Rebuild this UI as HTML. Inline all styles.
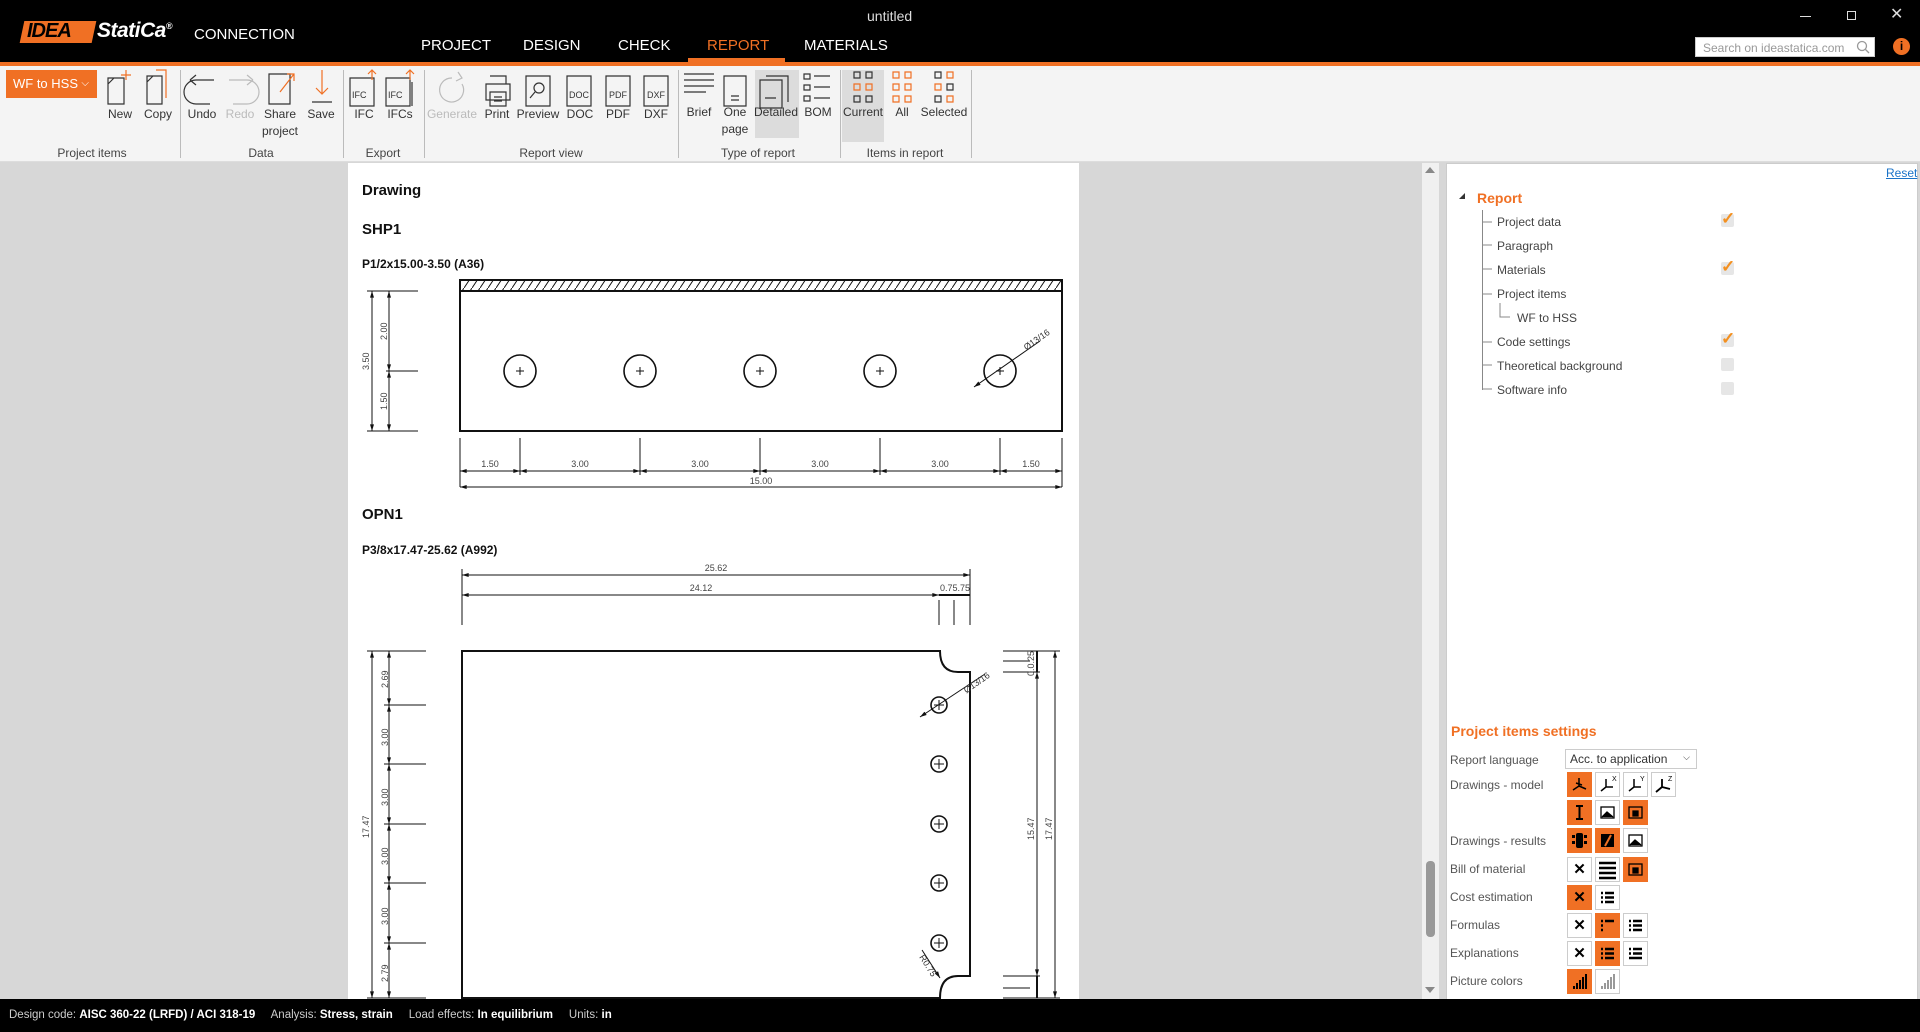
<!DOCTYPE html>
<html><head><meta charset="utf-8">
<style>
*{margin:0;padding:0;box-sizing:border-box}
body{width:1920px;height:1032px;position:relative;overflow:hidden;background:#d7d7d7;font-family:"Liberation Sans",sans-serif;color:#333}
.a{position:absolute}
#title{left:0;top:0;width:1920px;height:62px;background:#000}
#oline{left:0;top:62px;width:1920px;height:4px;background:#f07024}
#ribbon{left:0;top:66px;width:1920px;height:96px;background:#f4f4f4;border-bottom:1px solid #ddd}
.tab{top:37px;font-size:15px;color:#fff}
.lbl{font-size:12px;color:#333;text-align:center;width:70px;line-height:17px}
.glbl{top:146px;font-size:12px;color:#444;text-align:center;width:140px}
.sep{top:70px;width:1px;height:88px;background:#bbb}
#status{left:0;top:999px;width:1920px;height:33px;background:#000;color:#ccc;font-size:11.5px;line-height:33px;padding-left:9px}
#status b{color:#fff;font-weight:bold}
.tr{font-size:12px;color:#444;left:1497px}
.cb{left:1721px;width:13px;height:13px;background:#e6e6e6;border-radius:2px}
.ck{color:#f39020;font-size:17px;line-height:10px;font-weight:bold}
.sl{left:1450px;font-size:12px;color:#555}
.bt{width:25px;height:25px;border:1px solid #ccc;background:#fff}
.bt.o{background:#f07024;border-color:#f07024}
.bt svg{display:block}
</style></head><body>

<div id="title" class="a"></div>
<div class="a" style="left:22px;top:21px;width:72px;height:22px;transform:skewX(-12deg);background:#f07024"></div>
<div class="a" style="left:27px;top:20px;font-size:20px;font-weight:bold;font-style:italic;color:#000;letter-spacing:-1px">IDEA</div>
<div class="a" style="left:97px;top:19px;font-size:21px;font-weight:bold;font-style:italic;color:#fff;letter-spacing:-0.5px">StatiCa<sup style="font-size:9px">®</sup></div>
<div class="a" style="left:194px;top:26px;font-size:15px;color:#fff">CONNECTION</div>
<div class="a" style="left:867px;top:8px;font-size:14px;color:#ddd">untitled</div>
<div class="a tab" style="left:421px">PROJECT</div>
<div class="a tab" style="left:523px">DESIGN</div>
<div class="a tab" style="left:618px">CHECK</div>
<div class="a tab" style="left:707px;color:#f07024">REPORT</div>
<div class="a" style="left:688px;top:58px;width:97px;height:4px;background:#f07024"></div>
<div class="a tab" style="left:804px">MATERIALS</div>
<div class="a" style="left:1800px;top:16px;width:11px;height:1px;background:#ddd"></div>
<div class="a" style="left:1847px;top:11px;width:9px;height:9px;border:1px solid #ddd"></div>
<div class="a" style="left:1890px;top:4px;font-size:16px;color:#ddd">✕</div>
<div class="a" style="left:1695px;top:37px;width:180px;height:20px;background:#fff;border:1px solid #ccc;font-size:12px;color:#999;padding:3px 0 0 7px">Search on ideastatica.com</div>
<svg class="a" style="left:1856px;top:40px" width="14" height="14"><circle cx="6" cy="6" r="4.5" fill="none" stroke="#999" stroke-width="1.3"/><line x1="9.5" y1="9.5" x2="13" y2="13" stroke="#999" stroke-width="1.3"/></svg>
<div class="a" style="left:1893px;top:38px;width:17px;height:17px;border-radius:50%;background:#f07024;color:#000;font-size:12px;text-align:center;line-height:17px;font-weight:bold">i</div>
<div id="oline" class="a"></div>

<div id="ribbon" class="a"></div>
<div class="a" style="left:755px;top:70px;width:44px;height:68px;background:#dcdcdc"></div>
<div class="a" style="left:842px;top:70px;width:42px;height:72px;background:#dcdcdc"></div>
<div class="a" style="left:6px;top:70px;width:91px;height:28px;background:#f07024;color:#fff;font-size:13px;line-height:28px;padding-left:7px">WF to HSS <span style="float:right;margin-right:8px;font-size:10px">⌵</span></div>

<svg class="a" style="left:0;top:66px" width="980" height="60" fill="none" stroke="#333" stroke-width="1.2">
 <path d="M108,12 H124 V38 H108 V18 Z M108,18 L114,12"/><path d="M126,4 V14 M121,9 H131" stroke="#f07024"/>
 <path d="M147,10 H162 V38 H147 V16 Z M147,16 L153,10"/><path d="M156,4 H166 V32" stroke="#f07024"/>
 <path d="M210,38 H196 A12,12 0 0 1 196,14 H214 M190,14 L196,9 M190,14 L196,19" />
 <path d="M233,38 H247 A12,12 0 0 0 247,14 H229 M253,14 L247,9 M253,14 L247,19" stroke="#bbb"/>
 <path d="M269,8 H290 V38 H269 Z"/><path d="M280,26 L294,8 M287,8 H294 V15" stroke="#f07024"/>
 <path d="M312,36 H332"/><path d="M322,4 V28 M316,22 L322,28 L328,22" stroke="#f07024"/>
 <path d="M350,12 H374 V40 H350 V18 Z"/><path d="M372,4 V14 M368,8 L372,4 L376,8" stroke="#f07024"/>
 <path d="M386,12 H410 V40 H386 V18 Z M412,16 V40"/><path d="M410,4 V14 M406,8 L410,4 L414,8" stroke="#f07024"/>
 <path d="M462,18 A12,12 0 1 1 452,12 M458,6 L462,12 L456,15" stroke="#bbb"/>
 <path d="M486,18 H510 V34 H486 Z M490,10 H506 V18 M490,26 H506 V40 H490 Z M494,31 H502 M494,35 H502"/>
 <path d="M526,10 H550 V40 H526 Z"/><circle cx="539" cy="22" r="5"/><path d="M535,26 L530,32"/>
 <path d="M567,10 H591 V40 H567 V16 Z"/>
 <path d="M606,10 H630 V40 H606 V16 Z"/>
 <path d="M644,10 H668 V40 H644 V16 Z"/>
 <path d="M684,8 H714 M684,14 H714 M684,20 H714 M684,26 H706"/>
 <path d="M724,10 H746 V40 H724 Z M731,30 H739 M731,34 H739"/>
 <path d="M766,10 H788 V36 M760,14 H782 V42 H760 Z M765,32 H776"/>
 <path d="M804,8 h6 v5 h-6z M814,10 H830 M804,19 h6 v5 h-6z M814,21 H830 M804,30 h6 v5 h-6z M814,32 H830"/>
 <path d="M854,6 h6 v6 h-6z M866,6 h6 v6 h-6z M854,30 h6 v6 h-6z M866,30 h6 v6 h-6z"/><path d="M854,18 h6 v6 h-6z M866,18 h6 v6 h-6z" stroke="#f07024"/>
 <path d="M893,6 h6 v6 h-6z M905,6 h6 v6 h-6z M893,18 h6 v6 h-6z M905,18 h6 v6 h-6z M893,30 h6 v6 h-6z M905,30 h6 v6 h-6z" stroke="#f07024"/>
 <path d="M935,6 h6 v6 h-6z M947,18 h6 v6 h-6z M935,30 h6 v6 h-6z"/><path d="M947,6 h6 v6 h-6z M935,18 h6 v6 h-6z M947,30 h6 v6 h-6z" stroke="#f07024"/>
 <g stroke="none" fill="#333" font-family="Liberation Sans" font-size="9"><text x="352" y="32">IFC</text><text x="388" y="32">IFC</text><text x="569" y="32">DOC</text><text x="609" y="32">PDF</text><text x="647" y="32">DXF</text></g>
</svg>
<div class="a lbl" style="left:85px;top:106px">New</div>
<div class="a lbl" style="left:123px;top:106px">Copy</div>
<div class="a lbl" style="left:167px;top:106px">Undo</div>
<div class="a lbl" style="left:205px;top:106px;color:#bbb">Redo</div>
<div class="a lbl" style="left:245px;top:106px">Share<br>project</div>
<div class="a lbl" style="left:286px;top:106px">Save</div>
<div class="a lbl" style="left:329px;top:106px">IFC</div>
<div class="a lbl" style="left:365px;top:106px">IFCs</div>
<div class="a lbl" style="left:417px;top:106px;color:#bbb">Generate</div>
<div class="a lbl" style="left:462px;top:106px">Print</div>
<div class="a lbl" style="left:503px;top:106px">Preview</div>
<div class="a lbl" style="left:545px;top:106px">DOC</div>
<div class="a lbl" style="left:583px;top:106px">PDF</div>
<div class="a lbl" style="left:621px;top:106px">DXF</div>
<div class="a lbl" style="left:664px;top:104px">Brief</div>
<div class="a lbl" style="left:700px;top:104px">One<br>page</div>
<div class="a lbl" style="left:741px;top:104px">Detailed</div>
<div class="a lbl" style="left:783px;top:104px">BOM</div>
<div class="a lbl" style="left:828px;top:104px">Current</div>
<div class="a lbl" style="left:867px;top:104px">All</div>
<div class="a lbl" style="left:909px;top:104px">Selected</div>
<div class="a sep" style="left:180px"></div><div class="a sep" style="left:343px"></div><div class="a sep" style="left:424px"></div><div class="a sep" style="left:678px"></div><div class="a sep" style="left:840px"></div><div class="a sep" style="left:971px"></div>
<div class="a glbl" style="left:22px">Project items</div>
<div class="a glbl" style="left:191px">Data</div>
<div class="a glbl" style="left:313px">Export</div>
<div class="a glbl" style="left:481px">Report view</div>
<div class="a glbl" style="left:688px">Type of report</div>
<div class="a glbl" style="left:835px">Items in report</div>

<div class="a" style="left:348px;top:163px;width:731px;height:840px;background:#fff"></div>
<div class="a" style="left:362px;top:182px;font-size:15px;font-weight:bold;color:#111">Drawing</div>
<div class="a" style="left:362px;top:221px;font-size:15px;font-weight:bold;color:#111">SHP1</div>
<div class="a" style="left:362px;top:257px;font-size:12px;font-weight:bold;color:#111">P1/2x15.00-3.50 (A36)</div>
<div class="a" style="left:362px;top:506px;font-size:15px;font-weight:bold;color:#111">OPN1</div>
<div class="a" style="left:362px;top:543px;font-size:12px;font-weight:bold;color:#111">P3/8x17.47-25.62 (A992)</div>

<svg class="a" style="left:0;top:0" width="1920" height="1032" fill="none" stroke="#111" stroke-width="1">
<defs>
 <pattern id="h" width="8" height="12" patternUnits="userSpaceOnUse"><path d="M0,12 L8,0" stroke="#111" stroke-width="1"/></pattern>
 <marker id="m" viewBox="0 0 10 6" refX="10" refY="3" markerWidth="8" markerHeight="4" orient="auto-start-reverse"><path d="M0,0 L10,3 L0,6Z" fill="#111" stroke="none"/></marker>
</defs>
<rect x="460" y="280" width="602" height="151" stroke-width="2"/>
<rect x="460" y="280" width="602" height="11" fill="url(#h)" stroke-width="2"/>
<g stroke-width="1.6"><circle cx="520" cy="371" r="16"/><circle cx="640" cy="371" r="16"/><circle cx="760" cy="371" r="16"/><circle cx="880" cy="371" r="16"/><circle cx="1000" cy="371" r="16"/></g>
<path d="M516,371h8M520,367v8 M636,371h8M640,367v8 M756,371h8M760,367v8 M876,371h8M880,367v8 M996,371h8M1000,367v8"/>
<path d="M974,387 L1040,341" marker-start="url(#m)"/>
<text x="1022" y="347" font-size="9" fill="#333" stroke="none" transform="rotate(-35 1030 342)">Ø13/16</text>
<path d="M367,291 H418 M386,371 H418 M367,431 H418"/>
<path d="M372,291 V431" marker-start="url(#m)" marker-end="url(#m)"/>
<path d="M389,291 V371" marker-start="url(#m)" marker-end="url(#m)"/>
<path d="M389,371 V431" marker-start="url(#m)" marker-end="url(#m)"/>
<g font-size="9" fill="#444" stroke="none"><text transform="translate(369,370) rotate(-90)">3.50</text><text transform="translate(387,340) rotate(-90)">2.00</text><text transform="translate(387,410) rotate(-90)">1.50</text></g>
<path d="M460,438V487 M520,438V475 M640,438V475 M760,438V475 M880,438V475 M1000,438V475 M1062,438V487"/>
<g marker-start="url(#m)" marker-end="url(#m)"><path d="M460,471H520"/><path d="M520,471H640"/><path d="M640,471H760"/><path d="M760,471H880"/><path d="M880,471H1000"/><path d="M1000,471H1062"/><path d="M460,487H1062"/></g>
<g font-size="9" fill="#444" stroke="none" text-anchor="middle"><text x="490" y="467">1.50</text><text x="580" y="467">3.00</text><text x="700" y="467">3.00</text><text x="820" y="467">3.00</text><text x="940" y="467">3.00</text><text x="1031" y="467">1.50</text><text x="761" y="484">15.00</text></g>
<path d="M462,569V625 M939,600V625 M954,600V625 M970,569V625"/>
<path d="M462,575H970" marker-start="url(#m)" marker-end="url(#m)"/>
<path d="M462,595H939" marker-start="url(#m)" marker-end="url(#m)"/>
<path d="M939,595H954 M954,595H970" stroke-width="2"/>
<g font-size="9" fill="#444" stroke="none" text-anchor="middle"><text x="716" y="571">25.62</text><text x="701" y="591">24.12</text><text x="955" y="591">0.75.75</text></g>
<path d="M462,651 H940 Q940,672 958,672 H970 V976 H958 Q940,976 940,998 H462 Z" stroke-width="2"/>
<g stroke-width="1.6"><circle cx="939" cy="705" r="8"/><circle cx="939" cy="764" r="8"/><circle cx="939" cy="824" r="8"/><circle cx="939" cy="883" r="8"/><circle cx="939" cy="943" r="8"/></g>
<path d="M934,705h10M939,700v10 M934,764h10M939,759v10 M934,824h10M939,819v10 M934,883h10M939,878v10 M934,943h10M939,938v10"/>
<path d="M920,717 L985,674" marker-start="url(#m)"/>
<text x="962" y="690" font-size="9" fill="#333" stroke="none" transform="rotate(-35 970 685)">Ø13/16</text>
<path d="M922,950 L940,978" marker-end="url(#m)"/>
<text x="0" y="0" font-size="9" fill="#333" stroke="none" transform="translate(919,957) rotate(58)">R0.75</text>
<path d="M367,651H426 M384,705H426 M384,764H426 M384,824H426 M384,883H426 M384,943H426 M367,998H426"/>
<path d="M372,651V998" marker-start="url(#m)" marker-end="url(#m)"/>
<g marker-start="url(#m)" marker-end="url(#m)"><path d="M389,651V705"/><path d="M389,705V764"/><path d="M389,764V824"/><path d="M389,824V883"/><path d="M389,883V943"/><path d="M389,943V998"/></g>
<g font-size="9" fill="#444" stroke="none"><text transform="translate(369,838) rotate(-90)">17.47</text><text transform="translate(388,688) rotate(-90)">2.69</text><text transform="translate(388,746) rotate(-90)">3.00</text><text transform="translate(388,806) rotate(-90)">3.00</text><text transform="translate(388,865) rotate(-90)">3.00</text><text transform="translate(388,925) rotate(-90)">3.00</text><text transform="translate(388,982) rotate(-90)">2.79</text></g>
<path d="M1003,651H1060 M1003,661H1030 M1003,672H1040 M1003,976H1040 M1003,988H1030 M1003,998H1060"/>
<path d="M1037,672V976" marker-start="url(#m)" marker-end="url(#m)"/>
<path d="M1055,651V998" marker-start="url(#m)" marker-end="url(#m)"/>
<path d="M1037,651V672 M1037,976V998" stroke-width="2"/>
<g font-size="9" fill="#444" stroke="none"><text transform="translate(1034,840) rotate(-90)">15.47</text><text transform="translate(1052,840) rotate(-90)">17.47</text><text transform="translate(1034,676) rotate(-90)">0.0.25</text></g>
</svg>

<div class="a" style="left:1422px;top:163px;width:17px;height:837px;background:#f0f0f0"></div>
<div class="a" style="left:1425px;top:167px;width:0;height:0;border-left:5px solid transparent;border-right:5px solid transparent;border-bottom:6px solid #888"></div>
<div class="a" style="left:1425px;top:987px;width:0;height:0;border-left:5px solid transparent;border-right:5px solid transparent;border-top:6px solid #888"></div>
<div class="a" style="left:1426px;top:861px;width:9px;height:76px;background:#999;border-radius:4px"></div>

<div class="a" style="left:1446px;top:163px;width:472px;height:837px;background:#fff;border:1px solid #ccc"></div>
<div class="a" style="left:1886px;top:166px;font-size:12px;color:#1a73c8;text-decoration:underline">Reset</div>
<div class="a" style="left:1459px;top:193px;width:0;height:0;border-left:6px solid transparent;border-bottom:6px solid #333"></div>
<div class="a" style="left:1477px;top:190px;font-size:14px;font-weight:bold;color:#f07024">Report</div>
<div class="a" style="left:1482px;top:210px;width:1px;height:180px;background:#888"></div>
<svg class="a" style="left:1480px;top:210px" width="40" height="182" stroke="#888" fill="none"><path d="M2,12H12 M2,35H12 M2,59H12 M2,84H12 M2,132H12 M2,155H12 M2,179H12 M20,93V107H30"/></svg>
<div class="a tr" style="top:215px">Project data</div>
<div class="a tr" style="top:239px">Paragraph</div>
<div class="a tr" style="top:263px">Materials</div>
<div class="a tr" style="top:287px">Project items</div>
<div class="a tr" style="top:311px;left:1517px">WF to HSS</div>
<div class="a tr" style="top:335px">Code settings</div>
<div class="a tr" style="top:359px">Theoretical background</div>
<div class="a tr" style="top:383px">Software info</div>
<div class="a cb ck" style="top:214px">✓</div>
<div class="a cb ck" style="top:262px">✓</div>
<div class="a cb ck" style="top:334px">✓</div>
<div class="a cb" style="top:358px"></div>
<div class="a cb" style="top:382px"></div>

<div class="a" style="left:1451px;top:723px;font-size:14px;font-weight:bold;color:#f07024">Project items settings</div>
<div class="a sl" style="top:753px">Report language</div>
<div class="a" style="left:1565px;top:749px;width:132px;height:20px;border:1px solid #ccc;font-size:12px;color:#333;padding:2px 0 0 4px">Acc. to application <span style="position:absolute;right:6px;top:2px;font-size:9px">⌵</span></div>
<div class="a sl" style="top:778px">Drawings - model</div>
<div class="a sl" style="top:834px">Drawings - results</div>
<div class="a sl" style="top:862px">Bill of material</div>
<div class="a sl" style="top:890px">Cost estimation</div>
<div class="a sl" style="top:918px">Formulas</div>
<div class="a sl" style="top:946px">Explanations</div>
<div class="a sl" style="top:974px">Picture colors</div>

<div class="a bt o" style="left:1567px;top:772px"><svg width="23" height="23" stroke="#000" stroke-width="1.5" fill="none"><path d="M11,5V13 M11,13L5,17 M11,13L18,16 M8,10L14,12"/></svg></div>
<div class="a bt" style="left:1595px;top:772px"><svg width="23" height="23" stroke="#000" stroke-width="1.5" fill="none"><path d="M10,6V14 M10,14L5,18 M10,14L17,14"/><text x="16" y="8" font-size="7" fill="#000" stroke="none">X</text></svg></div>
<div class="a bt" style="left:1623px;top:772px"><svg width="23" height="23" stroke="#000" stroke-width="1.5" fill="none"><path d="M10,6V14 M10,14L5,18 M10,14L17,14"/><text x="16" y="8" font-size="7" fill="#000" stroke="none">Y</text></svg></div>
<div class="a bt" style="left:1651px;top:772px"><svg width="23" height="23" stroke="#000" stroke-width="1.8" fill="none"><path d="M10,6V14 M10,14L4,19 M10,14L18,16"/><text x="16" y="8" font-size="7" fill="#000" stroke="none">Z</text></svg></div>

<div class="a bt o" style="left:1567px;top:800px"><svg width="23" height="23" stroke="#000" stroke-width="2" fill="none"><path d="M8,5H15 M11.5,5V18 M8,18H15"/></svg></div>
<div class="a bt" style="left:1595px;top:800px"><svg width="23" height="23" stroke="#000" stroke-width="1.3" fill="none"><rect x="5" y="6" width="13" height="11"/><path d="M6,16L11,11L17,16" fill="#000"/></svg></div>
<div class="a bt o" style="left:1623px;top:800px"><svg width="23" height="23" stroke="#000" stroke-width="1.3" fill="none"><rect x="5" y="6" width="13" height="11"/><path d="M9,10h5v5h-5z" fill="#000"/></svg></div>

<div class="a bt o" style="left:1567px;top:828px"><svg width="23" height="23" fill="#000"><rect x="8" y="4" width="7" height="15" rx="2"/><rect x="4" y="6" width="3" height="3"/><rect x="16" y="6" width="3" height="3"/><rect x="4" y="12" width="3" height="3"/><rect x="16" y="12" width="3" height="3"/></svg></div>
<div class="a bt o" style="left:1595px;top:828px"><svg width="23" height="23"><rect x="5" y="5" width="13" height="13" fill="#000"/><path d="M9,17L15,6" stroke="#f07024" stroke-width="2"/></svg></div>
<div class="a bt" style="left:1623px;top:828px"><svg width="23" height="23" stroke="#000" stroke-width="1.3" fill="none"><rect x="5" y="6" width="13" height="11"/><path d="M6,16L11,11L17,16" fill="#000"/></svg></div>

<div class="a bt" style="left:1567px;top:857px;font-size:15px;text-align:center;line-height:23px;color:#000;font-weight:bold">✕</div>
<div class="a bt" style="left:1595px;top:857px"><svg width="23" height="23" stroke="#000" stroke-width="2.5"><path d="M3,5H20 M3,10H20 M3,15H20 M3,20H20"/></svg></div>
<div class="a bt o" style="left:1623px;top:857px"><svg width="23" height="23" stroke="#000" stroke-width="1.3" fill="none"><rect x="5" y="6" width="13" height="11"/><path d="M9,10h5v5h-5z" fill="#000"/></svg></div>

<div class="a bt o" style="left:1567px;top:885px;font-size:15px;text-align:center;line-height:23px;color:#000;font-weight:bold">✕</div>
<div class="a bt" style="left:1595px;top:885px"><svg width="23" height="23" stroke="#000" stroke-width="2.5"><path d="M5,7h2 M9,7H18 M5,11.5h2 M9,11.5H18 M5,16h2 M9,16H18"/></svg></div>

<div class="a bt" style="left:1567px;top:913px;font-size:15px;text-align:center;line-height:23px;color:#000;font-weight:bold">✕</div>
<div class="a bt o" style="left:1595px;top:913px"><svg width="23" height="23" stroke="#000" stroke-width="2.5"><path d="M5,7h2 M9,7H18 M5,11.5h2 M5,16h2"/></svg></div>
<div class="a bt" style="left:1623px;top:913px"><svg width="23" height="23" stroke="#000" stroke-width="2.5"><path d="M5,7h2 M9,7H18 M5,11.5h2 M9,11.5H18 M5,16h2 M9,16H18"/></svg></div>

<div class="a bt" style="left:1567px;top:941px;font-size:15px;text-align:center;line-height:23px;color:#000;font-weight:bold">✕</div>
<div class="a bt o" style="left:1595px;top:941px"><svg width="23" height="23" stroke="#000" stroke-width="2.5"><path d="M5,7h2 M9,7H18 M5,11.5h2 M9,11.5H18 M5,16h2 M9,16H18"/></svg></div>
<div class="a bt" style="left:1623px;top:941px"><svg width="23" height="23" stroke="#000" stroke-width="2.5"><path d="M5,7h2 M9,7H18 M5,11.5h2 M9,11.5H18 M5,16h13"/></svg></div>

<div class="a bt o" style="left:1567px;top:969px"><svg width="23" height="23" fill="#000"><rect x="5" y="16" width="2" height="3"/><rect x="8" y="13" width="2" height="6"/><rect x="11" y="10" width="2" height="9"/><rect x="14" y="7" width="2" height="12"/><rect x="17" y="4" width="2" height="15"/></svg></div>
<div class="a bt" style="left:1595px;top:969px"><svg width="23" height="23" fill="#999"><rect x="5" y="16" width="2" height="3"/><rect x="8" y="13" width="2" height="6"/><rect x="11" y="10" width="2" height="9"/><rect x="14" y="7" width="2" height="12"/><rect x="17" y="4" width="2" height="15"/></svg></div>

<div id="status" class="a">Design code: <b>AISC 360-22 (LRFD) / ACI 318-19</b> &nbsp;&nbsp;&nbsp; Analysis: <b>Stress, strain</b> &nbsp;&nbsp;&nbsp; Load effects: <b>In equilibrium</b> &nbsp;&nbsp;&nbsp; Units: <b>in</b></div>
</body></html>
